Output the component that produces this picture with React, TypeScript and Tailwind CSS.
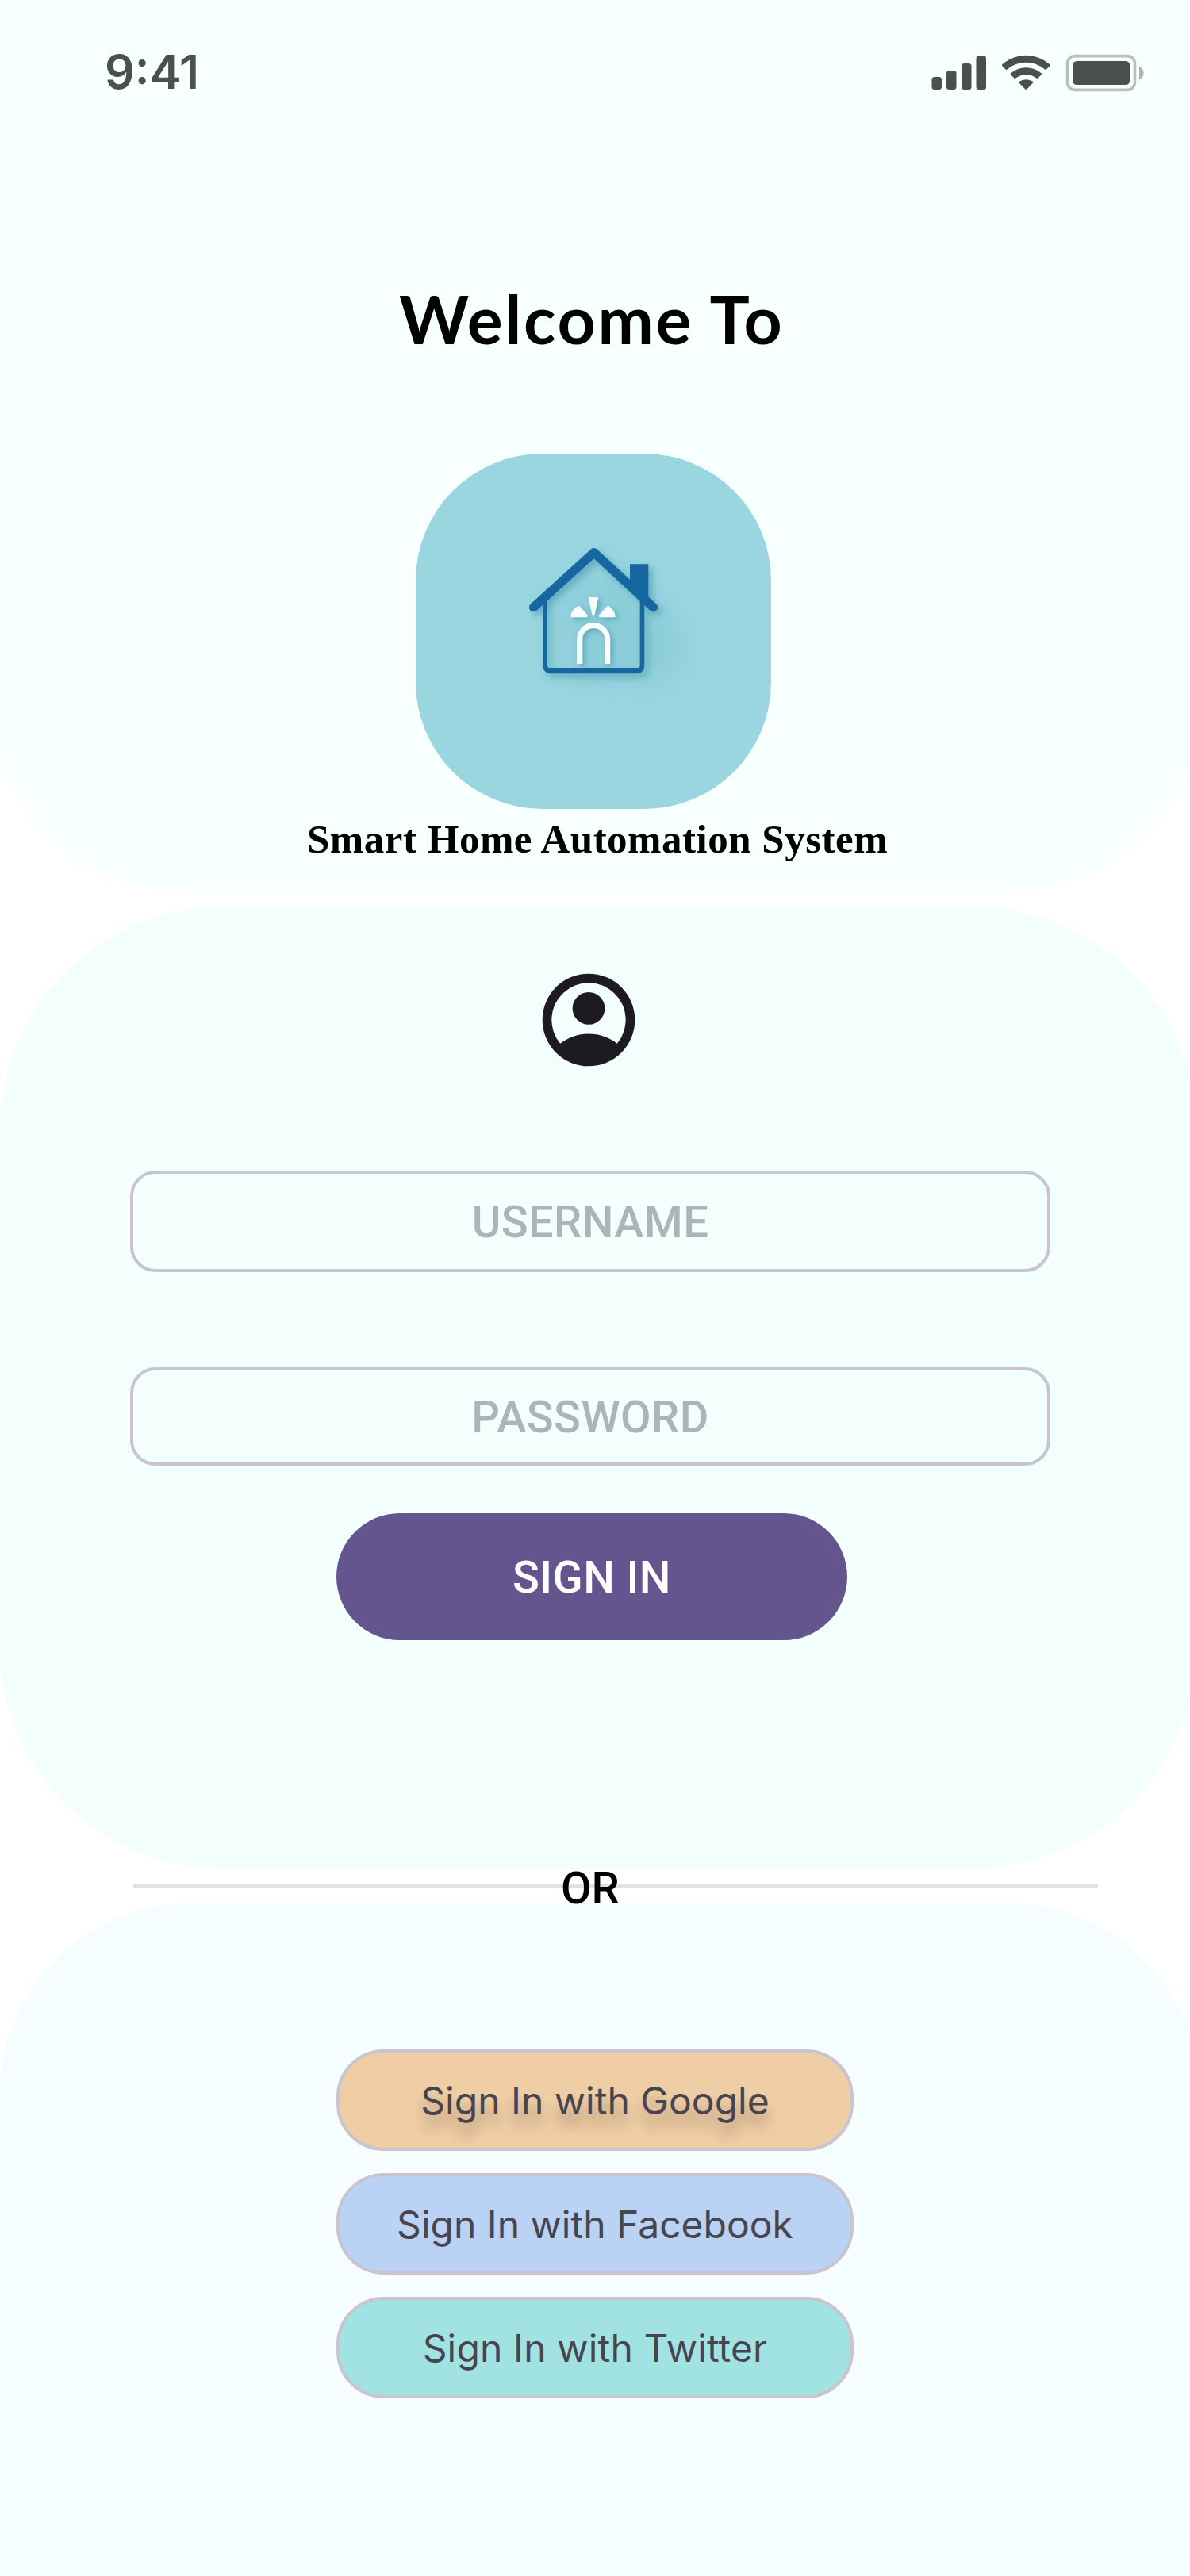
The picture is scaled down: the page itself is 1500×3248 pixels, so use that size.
import React from "react";

function StatusBar() {
  return (
    <div className="flex h-[180px] items-start justify-between pl-[132px] pr-[57px] pt-[56px] text-[#4a5050]">
      <span className="font-[Inter] text-[59px] font-semibold leading-[70px]">9:41</span>
      <svg width="270" height="48" viewBox="1173 68 270 48" className="mt-3" fill="#4a5050">
        <rect x="1174.5" y="97" width="12.5" height="16" rx="3.5" />
        <rect x="1193" y="89" width="12.5" height="24" rx="3.5" />
        <rect x="1212" y="80" width="12.5" height="33" rx="3.5" />
        <rect x="1230.5" y="70.5" width="12.5" height="42.5" rx="3.5" />
        <path d="M1263.4 83.2Q1262.400 82 1263.600 81A45 45 0 0 1 1323 81Q1324.200 82 1323.200 83.200L1319 87.600Q1318 88.500 1317 87.600A36.500 36.500 0 0 0 1269.600 87.600Q1268.600 88.500 1267.600 87.600Z" />
        <path d="M1274 94.300Q1273 93.200 1274.200 92.200A29.500 29.500 0 0 1 1312.500 92.200Q1313.600 93.200 1312.600 94.300L1308.300 98.600Q1307.300 99.400 1306.300 98.600A21 21 0 0 0 1280.400 98.600Q1279.400 99.400 1278.400 98.600Z" />
        <path d="M1284.500 104.600Q1283.600 103.600 1284.700 102.800A15.500 15.500 0 0 1 1302 102.800Q1303 103.600 1302.100 104.600L1294.300 112.500Q1293.300 113.400 1292.300 112.500Z" />
        <rect x="1345.500" y="70.600" width="85" height="42.800" rx="9.500" fill="none" stroke="#b9c0c0" strokeWidth="3.600" />
        <rect x="1352" y="77" width="72.300" height="30" rx="5.500" />
        <path d="M1436 84v16.500c3.400-1.400 5.500-4.600 5.500-8.250S1439.400 85.400 1436 84Z" fill="#adb3b3" />
      </svg>
    </div>
  );
}

function HouseLogo() {
  return (
    <div className="ml-[532px] mt-[110px] h-[448px] w-[448px] overflow-hidden rounded-[160px] bg-[#9ad6e0]">
      <svg width="448" height="448" viewBox="72 66 1344 1344">
        <defs>
          <filter id="soft" x="-50%" y="-50%" width="200%" height="200%">
            <feGaussianBlur stdDeviation="60" />
          </filter>
          <filter id="near" x="-30%" y="-30%" width="160%" height="160%">
            <feDropShadow dx="14" dy="15" stdDeviation="15" floodColor="#3b93ab" floodOpacity="0.6" />
          </filter>
          <filter id="glyph" x="-30%" y="-30%" width="160%" height="160%">
            <feDropShadow dx="10" dy="9" stdDeviation="9" floodColor="#3b93ab" floodOpacity="0.6" />
          </filter>
        </defs>
        <path d="M620 580L760 490L980 600L1080 740V880L980 940H740L620 880Z" fill="#6fbccb" opacity="0.32" filter="url(#soft)" />
        <g filter="url(#near)" fill="#14669f">
          <path d="M882 484H952V625L882 565Z" />
          <path
            fillRule="evenodd"
            d="M553 615V864Q553 898 587 898H903Q937 898 937 864V615H920V866Q920 876 910 876H580Q570 876 570 866V615Z"
          />
          <path d="M518 647L746 440L970 647" fill="none" stroke="#14669f" strokeWidth="34" strokeLinecap="round" strokeLinejoin="round" />
        </g>
        <g filter="url(#glyph)" fill="#f8ffff">
          <path d="M725 612Q725 609 728 609H759Q762 609 762 612L749 674Q744 686 739 674Z" />
          <path d="M658 681Q662 656 686 643Q690 641 693 644L720 674Q725 681 719 685H662Q658 685 658 681Z" />
          <path d="M827 681Q823 656 802 643Q798 641 795 644L767 674Q762 681 768 685H823Q827 685 827 681Z" />
          <path d="M692 861V768A52.500 52.500 0 0 1 797 768V861" fill="none" stroke="#f4ffff" strokeWidth="21" />
        </g>
      </svg>
    </div>
  );
}

function AccountIcon() {
  return (
    <svg width="140" height="140" viewBox="0 0 24 24" className="ml-[672px]" fill="#1d1b20">
      <path
        fillRule="evenodd"
        d="M12 2A10 10 0 1 1 12 22A10 10 0 1 1 12 2ZM5.850 17.100C6.700 16.450 7.650 15.937 8.700 15.562S10.850 15 12 15S14.250 15.187 15.300 15.562S17.300 16.450 18.150 17.100A8 8 0 1 0 5.850 17.100Z"
      />
      <circle cx="12" cy="9.500" r="3.500" />
    </svg>
  );
}

const providers = [
  { label: "Sign In with Google", style: "bg-[#efcda5] [text-shadow:0_16px_16px_rgba(0,0,0,0.25)]" },
  { label: "Sign In with Facebook", style: "bg-[#bad2f4]" },
  { label: "Sign In with Twitter", style: "bg-[#a1e3e3] tracking-[0.15px]" },
];

export default function App() {
  return (
    <main className="h-[3248px] w-[1500px] overflow-hidden bg-white">
      <header className="-ml-2 h-[1124px] w-[1520px] rounded-b-[240px] bg-[#f8ffff]">
        <div className="ml-2 w-[1500px]">
          <StatusBar />
        </div>
        <h1 className="ml-[511px] mt-[162px] whitespace-nowrap font-[Lato] text-[84px] font-bold leading-[120px] tracking-[2.7px] text-black">
          Welcome To
        </h1>
        <HouseLogo />
        <p className="ml-[395px] mt-[8px] whitespace-nowrap font-['Liberation_Serif'] text-[51px] font-bold leading-[60px] tracking-[0.5px] text-black">
          Smart Home Automation System
        </p>
      </header>

      <section className="mt-5 h-[1212px] w-[1508px] rounded-[280px] bg-[#f3fffd] pt-[72px]">
        <AccountIcon />
        <form className="ml-[164px] flex w-[1160px] flex-col font-[Roboto] text-[56px] font-medium">
          <input
            placeholder="USERNAME"
            className="mt-[120px] h-[128px] rounded-[32px] border-4 border-[#cac4d0] pt-0.5 text-center tracking-[0.4px] placeholder:text-[#aeb3b5] placeholder:opacity-100"
          />
          <input
            placeholder="PASSWORD"
            className="mt-[120px] h-[124px] rounded-[32px] border-4 border-[#cac4d0] pt-0.5 text-center tracking-[0.4px] placeholder:text-[#aeb3b5] placeholder:opacity-100"
          />
          <button type="button" className="ml-[260px] mt-[60px] h-[160px] w-[644px] rounded-full bg-[#65558f] pt-0.5 tracking-[0.4px] text-white">
            SIGN IN
          </button>
        </form>
      </section>

      <div className="flex h-11 items-center">
        <div className="ml-[168px] flex h-1 w-[1216px] items-center bg-[#e3e1e6]">
          <span className="ml-[539px] mt-[6px] font-[Roboto] text-[56px] font-medium leading-[66px] text-black">OR</span>
        </div>
      </div>

      <section className="h-[848px] w-[1512px] rounded-t-[240px] bg-[#f5fdff] pl-[424px] pt-[184px]">
        <div className="flex w-[652px] flex-col gap-7">
          {providers.map((p) => (
            <button
              key={p.label}
              type="button"
              className={`h-[128px] rounded-[60px] border-4 border-[#cac4d0] pt-px font-[Inter] text-[48px] text-[#49454f] ${p.style}`}
            >
              {p.label}
            </button>
          ))}
        </div>
      </section>
    </main>
  );
}
